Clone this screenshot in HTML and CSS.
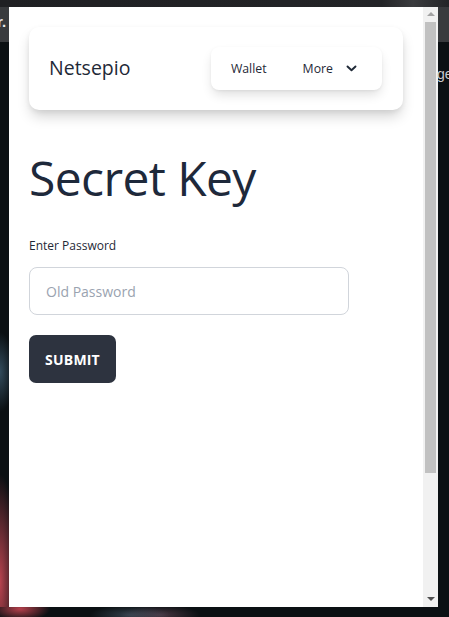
FILE: index.html
```html
<!DOCTYPE html>
<html>
<head>
<meta charset="utf-8">
<link rel="stylesheet" href="styles.css">
</head>
<body>
<div class="screen">
  <div class="topbar"></div>
  <div class="side-left"><div class="tab-strip"><span>r.</span></div><div class="blur-left"></div></div>
  <div class="popup">
    <div class="content">
      <nav class="navcard">
        <div class="brand">Netsepio</div>
        <div class="menu">
          <span class="menu-item">Wallet</span>
          <span class="menu-item more">More
            <svg class="chev" width="11" height="7" viewBox="0 0 11 7"><path d="M1.5 1.5 L5.5 5.3 L9.5 1.5" fill="none" stroke="#1f2937" stroke-width="1.9" stroke-linecap="round" stroke-linejoin="round"/></svg>
          </span>
        </div>
      </nav>
      <h1 class="title">Secret Key</h1>
      <label class="label">Enter Password</label>
      <input class="input" type="password" placeholder="Old Password">
      <button class="btn">SUBMIT</button>
    </div>
  </div>
  <div class="scrollbar">
    <div class="arrow up"></div>
    <div class="thumb"></div>
    <div class="track"></div>
    <div class="arrow down"></div>
  </div>
  <div class="side-right"><div class="tab-strip"></div><div class="ge">ge</div></div>
  <div class="bottom"></div>
</div>
</body>
</html>
```
FILE: styles.css
```css
html, body { margin: 0; padding: 0; }
body {
  width: 449px; height: 617px; overflow: hidden;
  background: #0a1013;
  font-family: "Open Sans", "Noto Sans", sans-serif;
}
.screen {
  display: grid;
  grid-template-columns: 9px 414px 15px 11px;
  grid-template-rows: 7px 600px 10px;
  width: 449px; height: 617px;
}
.topbar {
  grid-column: 1 / 5; grid-row: 1;
  background: linear-gradient(90deg, #1f2023 0%, #232427 85%, #3a3b3e 92%, #232427 100%);
}
.side-left {
  grid-column: 1; grid-row: 2;
  display: flex; flex-direction: column;
  background: #0b1013;
}
.tab-strip {
  height: 35px; background: #393b3e; flex: none;
  display: flex; align-items: center;
}
.tab-strip span {
  color: #e8eaed; font: bold 15px "Liberation Sans", sans-serif;
  margin-left: -3px; margin-top: -6px;
}
.blur-left {
  flex: 1;
  background:
    radial-gradient(ellipse 14px 40px at 0px 330px, rgba(60,90,110,0.8), transparent),
    radial-gradient(ellipse 20px 120px at 0px 540px, #b8434f, transparent 90%),
    #0b1013;
}
.popup {
  grid-column: 2; grid-row: 2;
  background: #ffffff;
  overflow: hidden;
}
.content { padding: 20px; }
.navcard {
  display: flex; align-items: center; justify-content: space-between;
  height: 83px; box-sizing: border-box;
  padding: 0 21px 0 20px;
  border-radius: 10px;
  background: #fff;
  box-shadow: 0 8px 14px -2px rgba(0,0,0,0.18), 0 2px 5px rgba(0,0,0,0.06);
}
.brand { font-size: 19.5px; color: #1f2937; margin-top: -2px; }
.menu {
  display: flex; align-items: center;
  height: 43px; box-sizing: border-box;
  padding: 0 25px 0 20px;
  border-radius: 8px;
  background: #fff;
  box-shadow: 0 6px 12px -2px rgba(0,0,0,0.14), 0 1px 3px rgba(0,0,0,0.05);
}
.menu-item { font-size: 12.3px; color: #1f2937; }
.more { margin-left: 36px; display: flex; align-items: center; }
.chev { margin-left: 13px; }
.title {
  margin: 38px 0 0 0;
  font-weight: 400; font-size: 48px; line-height: 60px;
  color: #1e293b; letter-spacing: -0.6px;
}
.label { display: block; margin-top: 30px; font-size: 12px; color: #1f2937; line-height: 16px; }
.input {
  display: block; box-sizing: border-box;
  margin-top: 13px; width: 320px; height: 48px;
  border: 1px solid #d1d5db; border-radius: 8px;
  padding: 0 16px; font: 14px "Open Sans", sans-serif; color: #1f2937;
  outline: none; background: #fff;
}
.input::placeholder { color: #9aa3b0; }
.btn {
  display: block; margin-top: 20px;
  width: 87px; height: 48px; border: 0; border-radius: 7px;
  background: #2d333f; color: #fff;
  font: 700 14px "Open Sans", sans-serif; letter-spacing: 0.2px;
  padding: 0;
}
.scrollbar {
  grid-column: 3; grid-row: 2;
  background: #f1f1f1;
  display: flex; flex-direction: column; align-items: center;
}
.arrow { width: 0; height: 0; border-left: 4px solid transparent; border-right: 4px solid transparent; flex: none; }
.arrow.up { border-bottom: 4px solid #a3a3a3; margin: 5px 0 6px; }
.arrow.down { border-top: 4px solid #505050; margin: 0 0 6px; }
.thumb { width: 11px; height: 451px; background: #c1c1c1; flex: none; }
.track { flex: 1; }
.side-right {
  grid-column: 4; grid-row: 2;
  display: flex; flex-direction: column;
  background: #0b1013;
}
.side-right .tab-strip { background: #393b3e; }
.ge { color: #c8cbce; font: 14px "Liberation Sans", sans-serif; margin-top: 24px; margin-left: -1px; }
.bottom {
  grid-column: 1 / 5; grid-row: 3;
  background:
    radial-gradient(ellipse 30px 12px at 20px 2px, #b5404c, transparent),
    radial-gradient(ellipse 40px 10px at 130px 8px, rgba(90,110,130,0.5), transparent),
    radial-gradient(ellipse 40px 10px at 160px 8px, rgba(130,90,110,0.5), transparent),
    #0b1013;
}
```
